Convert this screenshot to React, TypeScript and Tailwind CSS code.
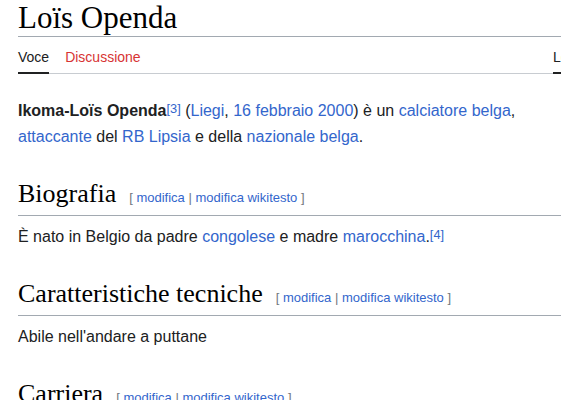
const serif = "font-['Liberation_Serif','Times_New_Roman',serif]"

function EditLinks() {
  return (
    <span className="ml-[13px] text-[13px] text-[#72777d] font-['Liberation_Sans',Arial,sans-serif]">
      [ <a className="text-[#3366cc]">modifica</a> | <a className="text-[#3366cc]">modifica wikitesto</a> ]
    </span>
  )
}

function Heading({ title }: { title: string }) {
  return (
    <h2 className="mt-[27px] border-b border-[#a2a9b1] pb-[1px] leading-[33px] flex items-baseline whitespace-nowrap">
      <span className={`${serif} text-[26px] text-black`}>{title}</span>
      <EditLinks />
    </h2>
  )
}

function Link({ children }: { children: React.ReactNode }) {
  return <a className="text-[#3366cc]">{children}</a>
}

function Ref({ n }: { n: number }) {
  return <sup className="text-[12.8px] text-[#3366cc] relative -top-[3px]">[{n}]</sup>
}

export default function App() {
  return (
    <div className="w-[561px] h-[400px] overflow-hidden bg-white pl-[18px] font-['Liberation_Sans',Arial,sans-serif] text-[#202122]">
      {/* titolo */}
      <h1 className={`${serif} text-[31px] leading-[36px] text-black border-b border-[#a2a9b1]`}>
        Loïs Openda
      </h1>

      {/* schede */}
      <div className="flex justify-between items-end border-b border-[#c8ccd1] h-[37px] text-[14px]">
        <div className="flex gap-[16px]">
          <span className="border-b-2 border-[#202122] pb-[4px] -mb-[1px]">Voce</span>
          <span className="text-[#d73333] pb-[4px]">Discussione</span>
        </div>
        <div className="w-[8px] overflow-hidden whitespace-nowrap border-b-2 border-[#202122] pb-[4px] -mb-[1px]">
          Leggi
        </div>
      </div>

      {/* incipit */}
      <p className="mt-[24px] text-[16px] leading-[26px]">
        <b>Ikoma-Loïs Openda</b>
        <Ref n={3} /> (<Link>Liegi</Link>, <Link>16 febbraio</Link> <Link>2000</Link>) è un{' '}
        <Link>calciatore</Link> <Link>belga</Link>, <Link>attaccante</Link> del <Link>RB Lipsia</Link> e
        della <Link>nazionale belga</Link>.
      </p>

      <Heading title="Biografia" />
      <p className="mt-[8px] text-[16px] leading-[26px]">
        È nato in Belgio da padre <Link>congolese</Link> e madre <Link>marocchina</Link>.<Ref n={4} />
      </p>

      <Heading title="Caratteristiche tecniche" />
      <p className="mt-[8px] text-[16px] leading-[26px]">Abile nell'andare a puttane</p>

      <Heading title="Carriera" />
    </div>
  )
}
